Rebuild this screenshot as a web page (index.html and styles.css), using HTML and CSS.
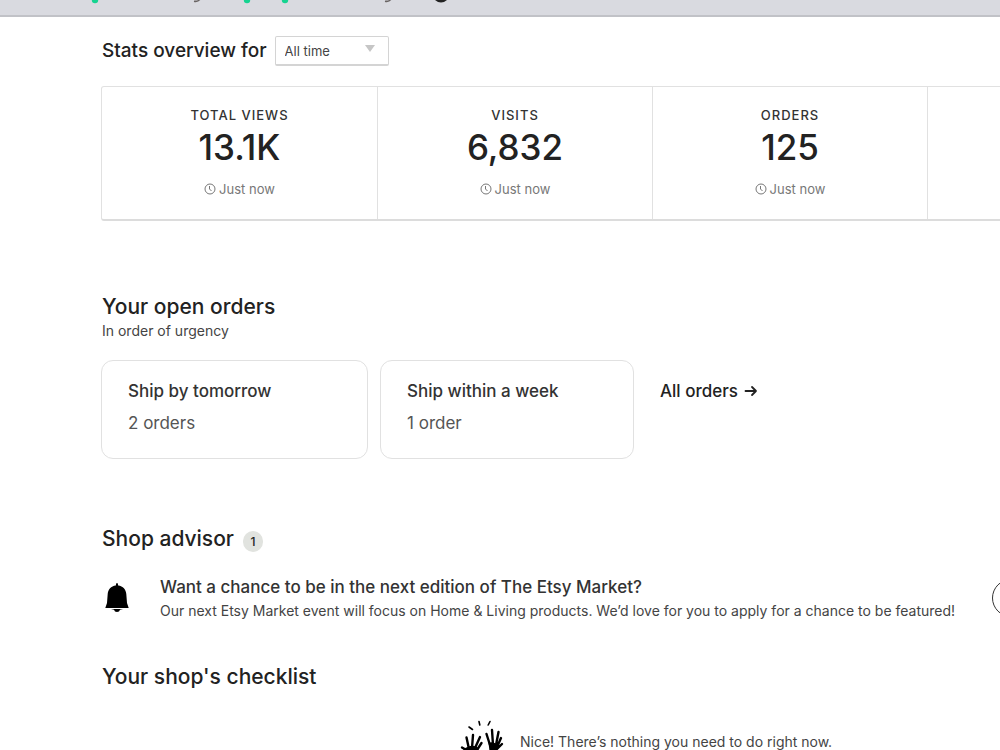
FILE: index.html
```html
<!DOCTYPE html>
<html lang="en">
<head>
<meta charset="utf-8">
<title>Shop dashboard</title>
<link rel="stylesheet" href="styles.css">
</head>
<body>
<header class="banner">
  <svg class="banner-art" width="460" height="4" viewBox="0 0 460 4" aria-hidden="true">
    <g fill="#16d391"><circle cx="95" cy="0" r="3.2"/><circle cx="247" cy="0" r="3.2"/><circle cx="285" cy="0" r="3.2"/></g>
    <g fill="none" stroke="#6a6564" stroke-width="1.5"><path d="M194 1.2q4 .8 6-2M385 1.2q4 .8 6-2"/></g>
    <path d="M435 0q6 5 12 0z" fill="#222"/>
  </svg>
</header>
<main class="page">
  <section class="stats">
    <div class="stats-head">
      <label class="title title-small" for="range">Stats overview for</label>
      <div class="picker">
        <select id="range" class="picker-select"><option>All time</option></select>
        <svg class="picker-arrow" width="10" height="7" viewBox="0 0 10 7" aria-hidden="true"><path d="M0 0h10L5 7z" fill="#c6c6c6"/></svg>
      </div>
    </div>
    <div class="stat-row">
      <div class="stat">
        <h3 class="stat-label">TOTAL VIEWS</h3>
        <p class="stat-value">13.1K</p>
        <p class="stat-time"><svg class="clock" width="12" height="12" viewBox="0 0 12 12" aria-hidden="true"><circle cx="6" cy="6" r="5"/><path d="M5.5 3v3l2 2"/></svg>Just now</p>
      </div>
      <div class="stat">
        <h3 class="stat-label">VISITS</h3>
        <p class="stat-value">6,832</p>
        <p class="stat-time"><svg class="clock" width="12" height="12" viewBox="0 0 12 12" aria-hidden="true"><circle cx="6" cy="6" r="5"/><path d="M5.5 3v3l2 2"/></svg>Just now</p>
      </div>
      <div class="stat">
        <h3 class="stat-label">ORDERS</h3>
        <p class="stat-value">125</p>
        <p class="stat-time"><svg class="clock" width="12" height="12" viewBox="0 0 12 12" aria-hidden="true"><circle cx="6" cy="6" r="5"/><path d="M5.5 3v3l2 2"/></svg>Just now</p>
      </div>
      <div class="stat"></div>
    </div>
  </section>

  <section class="orders">
    <h2 class="title">Your open orders</h2>
    <p class="small">In order of urgency</p>
    <div class="order-row">
      <a class="order-card order-card-wide" href="#tomorrow"><strong class="strong">Ship by tomorrow</strong><span class="order-count">2 orders</span></a>
      <a class="order-card" href="#week"><strong class="strong">Ship within a week</strong><span class="order-count">1 order</span></a>
      <a class="all-orders strong" href="#orders">All orders
        <svg width="14" height="12" viewBox="0 0 14 12" fill="none" stroke="#222" stroke-width="1.8" stroke-linecap="round" stroke-linejoin="round" aria-hidden="true"><path d="M1.5 6h10.5M8 2l4 4-4 4"/></svg>
      </a>
    </div>
  </section>

  <section class="advisor">
    <div class="advisor-head"><h2 class="title">Shop advisor</h2><span class="count">1</span></div>
    <div class="advice">
      <svg class="bell" width="24" height="30" viewBox="0 0 24 30" aria-hidden="true"><path d="M12 0q1 0 1.2 2.4C18 3 21 6.500 21.300 11l.7 9 1.700 5H.3L2 20l.7-9C3 6.500 6 3 10.800 2.400Q11 0 12 0zM6 26h12l-3 .8q-.5 2.200-3 2.200t-3-2.200z"/></svg>
      <div class="advice-text">
        <h3 class="strong">Want a chance to be in the next edition of The Etsy Market?</h3>
        <p class="small">Our next Etsy Market event will focus on Home &amp; Living products. We’d love for you to apply for a chance to be featured!</p>
      </div>
      <button class="apply" type="button" aria-label="Apply"></button>
    </div>
  </section>

  <section class="checklist">
    <h2 class="title">Your shop's checklist</h2>
    <div class="done">
      <svg class="hands" width="44" height="44" viewBox="0 0 44 44" aria-hidden="true">
        <g fill="none" stroke="#000" stroke-linecap="round">
          <path stroke-width="1.600" d="M9 7l3.500 2.500M19 1.500l.8 3.500M30 1.500l-1.800 3.500"/>
          <path stroke-width="2.400" d="M9 29L6.500 17.500M12 28l1-13M15 28l5-11M17 30l4.500-7M8 31l-6-3.500M30 25l-3.500-11M33 25l-1-15M36 25l2.500-13M37 27l4-9M37 29l5-5"/>
        </g>
        <path d="M7.500 27q6-3 11 1l-1 8-2 7H7l.5-9-4.500-5zM28.500 23q5-2 9 2l1 3-4 6-1 9h-6l2-12z"/>
      </svg>
      <p class="small">Nice! There’s nothing you need to do right now.</p>
    </div>
  </section>
</main>
</body>
</html>
```
FILE: styles.css
```css
* { box-sizing: border-box; }
body { margin: 0; overflow: hidden; background: #fff; color: #222; font-family: Inter, "Liberation Sans", sans-serif; }
h2, h3, p { margin: 0; }
a { color: inherit; text-decoration: none; }
.banner { height: 17px; background: #d9dae0; border-bottom: 2px solid #c1c2c7; }
.banner-art { display: block; }
.page { padding: 19px 0 0 101px; overflow: hidden; }
.title { padding-left: 1px; font-size: 21px; line-height: 28px; font-weight: 500; white-space: nowrap; }
.title-small { font-size: 19px; }
.small { padding-left: 1px; font-size: 14px; line-height: 20px; color: #444; white-space: nowrap; }
.strong { font-size: 17px; line-height: 24px; font-weight: 500; color: #333; white-space: nowrap; }
.stats-head { display: flex; align-items: center; gap: 8px; }
.picker { position: relative; }
.picker-select { display: block; appearance: none; width: 114px; height: 30px; padding: 0 9px; border: 1px solid #d4d4d4; border-bottom-width: 2px; border-radius: 2px; background: #fff; color: #444; font: 13px Inter, "Liberation Sans", sans-serif; }
.picker-arrow { position: absolute; top: 9px; right: 14px; pointer-events: none; }
.stat-row { display: flex; width: max-content; margin-top: 20px; border: 1px solid #e1e1e1; border-bottom: 2px solid #dcdcdc; border-radius: 3px; }
.stat { width: 275px; padding: 18px 0 20px; text-align: center; }
.stat + .stat { border-left: 1px solid #e1e1e1; }
.stat-label { font-size: 13px; line-height: 20px; font-weight: 500; letter-spacing: 1px; color: #333; }
.stat-value { font-size: 35px; line-height: 44px; font-weight: 500; }
.stat-time { display: flex; align-items: center; justify-content: center; gap: 3px; margin-top: 10px; font-size: 13px; line-height: 20px; color: #777; }
.clock { fill: none; stroke: #777; stroke-width: 1; }
.orders { margin-top: 72px; }
.order-row { display: flex; gap: 12px; margin-top: 19px; }
.order-card { width: 254px; padding: 18px 26px 23px; border: 1px solid #e1e1e1; border-radius: 12px; }
.order-card-wide { width: 267px; }
.order-card .strong { display: block; }
.order-count { display: block; margin-top: 8px; font-size: 17px; line-height: 24px; color: #555; }
.all-orders { display: flex; align-items: center; align-self: flex-start; gap: 6px; padding: 19px 14px; color: #222; }
.advisor { margin-top: 66px; }
.advisor-head { display: flex; align-items: center; gap: 9px; }
.count { width: 20px; margin-top: 4px; border-radius: 10px; background: #e1e3df; font-size: 12px; line-height: 21px; font-weight: 500; text-align: center; }
.advice { display: flex; align-items: center; margin-top: 22px; }
.bell { flex: none; margin: 0 30px 0 4px; }
.advice-text { flex: none; width: 833px; }
.advice-text .strong { padding-left: 1px; }
.advice-text .small { margin-top: 2px; }
.apply { flex: none; width: 120px; height: 38px; border: 1px solid #333; border-radius: 19px; background: #fff; }
.checklist { margin-top: 42px; }
.done { display: flex; align-items: flex-start; gap: 15px; margin: 29px 0 0 359px; }
.done .small { margin-top: 12px; }
```
